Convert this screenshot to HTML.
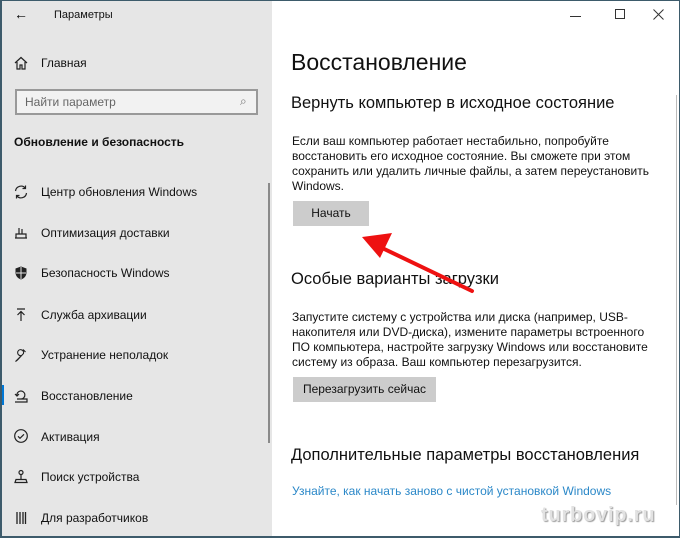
<!DOCTYPE html>
<html><head><meta charset="utf-8"><style>
*{margin:0;padding:0;box-sizing:border-box}
body{width:680px;height:538px;overflow:hidden;background:#fff;font-family:"Liberation Sans","DejaVu Sans",sans-serif;position:relative;color:#000}
.a{position:absolute;white-space:nowrap}
#side{position:absolute;left:0;top:0;width:272px;height:538px;background:#e6e6e6}
.nav{position:absolute;left:41px;font-size:12px;color:#111}
.ic{position:absolute;left:13px;width:16px;height:16px}
.p{font-size:12px;line-height:15px;color:#111}
.btn{position:absolute;background:#cccccc;font-size:12px;text-align:center;color:#111}
</style></head><body>
<div id="side">
 <div class="a" style="left:14px;top:6px;font-size:14px">←</div>
 <div class="a" style="left:54px;top:9px;font-size:11px;color:#111">Параметры</div>
 <svg class="ic" style="top:55px" viewBox="0 0 16 16" fill="none" stroke="#222" stroke-width="1.2"><path d="M2 8L8 2.5 14 8M4 7v7h3v-4h2v4h3V7"/></svg>
 <div class="nav" style="top:56px">Главная</div>
 <div class="a" style="left:15px;top:89px;width:243px;height:26px;border:2px solid #999;background:#f2f2f2"></div>
 <div class="a" style="left:25px;top:95px;font-size:12px;color:#666">Найти параметр</div>
 <div class="a" style="left:240px;top:94px;font-size:12px;color:#777">⌕</div>
 <div class="a" style="left:14px;top:135px;font-size:12px;font-weight:bold;color:#111">Обновление и безопасность</div>
 <div class="a" style="left:268px;top:183px;width:2px;height:260px;background:#8a8a8a"></div>
 <div class="a" style="left:0;top:385px;width:4px;height:20px;background:#0078d7"></div>
 <svg class="ic" style="top:184px" viewBox="0 0 16 16" fill="none" stroke="#222" stroke-width="1.2"><path d="M2.5 7a5.5 5.5 0 0 1 10-2.5M13.5 9a5.5 5.5 0 0 1-10 2.5M12.5 1.5v3h-3M3.5 14.5v-3h3"/></svg>
 <div class="nav" style="top:185px">Центр обновления Windows</div>
 <svg class="ic" style="top:225px" viewBox="0 0 16 16" fill="none" stroke="#222" stroke-width="1.2"><path d="M2 13h12M3 13V9h10v4M6 9V3M9 9V4"/></svg>
 <div class="nav" style="top:226px">Оптимизация доставки</div>
 <svg class="ic" style="top:265px" viewBox="0 0 16 16"><path d="M8 1.5L2.5 3.5v4c0 3.5 2.5 6 5.5 7 3-1 5.5-3.5 5.5-7v-4z" fill="#222"/><path d="M8 2v12M3 8h10" stroke="#e6e6e6" stroke-width="1"/></svg>
 <div class="nav" style="top:266px">Безопасность Windows</div>
 <svg class="ic" style="top:307px" viewBox="0 0 16 16" fill="none" stroke="#222" stroke-width="1.2"><path d="M4 2h8M8 14V4.5M4.5 8L8 4.5 11.5 8"/></svg>
 <div class="nav" style="top:308px">Служба архивации</div>
 <svg class="ic" style="top:347px" viewBox="0 0 16 16" fill="none" stroke="#222" stroke-width="1.1"><path d="M2.5 14.5l6-6a3 3 0 1 1 2-2 2 2 0 0 0 0 0l-6 6.5zM10 2.5l2.5 2.5"/></svg>
 <div class="nav" style="top:348px">Устранение неполадок</div>
 <svg class="ic" style="top:388px" viewBox="0 0 16 16" fill="none" stroke="#222" stroke-width="1.2"><path d="M2 14h12v-3H4M4 8a4 4 0 1 1 4 3M2 6l2 2 2-2"/></svg>
 <div class="nav" style="top:389px">Восстановление</div>
 <svg class="ic" style="top:428px" viewBox="0 0 16 16" fill="none" stroke="#222" stroke-width="1.2"><circle cx="8" cy="8" r="6.3"/><path d="M5 8.3l2 2 4-4"/></svg>
 <div class="nav" style="top:430px">Активация</div>
 <svg class="ic" style="top:469px" viewBox="0 0 16 16" fill="none" stroke="#222" stroke-width="1.2"><circle cx="8" cy="3.5" r="2"/><path d="M8 5.5v5M3 10.5h10l1 3H2z"/></svg>
 <div class="nav" style="top:470px">Поиск устройства</div>
 <svg class="ic" style="top:510px" viewBox="0 0 16 16" fill="none" stroke="#222" stroke-width="1.3"><path d="M4 2v12M7 2v12M10 2v12M12.5 2v12"/></svg>
 <div class="nav" style="top:511px">Для разработчиков</div>
</div>
<div class="a" style="left:570px;top:16px;width:11px;height:1px;background:#333"></div>
<div class="a" style="left:615px;top:9px;width:10px;height:10px;border:1px solid #333"></div>
<svg class="a" style="left:653px;top:9px" width="11" height="11"><path d="M0.5 0.5L10.5 10.5M10.5 0.5L0.5 10.5" stroke="#333" stroke-width="1"/></svg>
<div class="a" style="left:676px;top:95px;width:1px;height:410px;background:#bbb"></div>
<div class="a" style="left:291px;top:49px;font-size:23px;color:#111">Восстановление</div>
<div class="a" style="left:291px;top:94px;font-size:16.5px;color:#111">Вернуть компьютер в исходное состояние</div>
<div class="a p" style="left:292px;top:134px">Если ваш компьютер работает нестабильно, попробуйте<br>восстановить его исходное состояние. Вы сможете при этом<br>сохранить или удалить личные файлы, а затем переустановить<br>Windows.</div>
<div class="btn" style="left:293px;top:201px;width:76px;height:25px;line-height:25px">Начать</div>
<div class="a" style="left:291px;top:270px;font-size:16.5px;color:#111">Особые варианты загрузки</div>
<div class="a p" style="left:292px;top:310px">Запустите систему с устройства или диска (например, USB-<br>накопителя или DVD-диска), измените параметры встроенного<br>ПО компьютера, настройте загрузку Windows или восстановите<br>систему из образа. Ваш компьютер перезагрузится.</div>
<div class="btn" style="left:293px;top:377px;width:143px;height:25px;line-height:25px">Перезагрузить сейчас</div>
<div class="a" style="left:291px;top:446px;font-size:16.5px;color:#111">Дополнительные параметры восстановления</div>
<div class="a" style="left:292px;top:484px;font-size:12px;color:#2b88c8">Узнайте, как начать заново с чистой установкой Windows</div>
<div class="a" style="left:541px;top:504px;font-size:20px;font-weight:bold;letter-spacing:0.8px;color:#e2e2e2;text-shadow:1px 1px 1px #9a9a9a">turbovip.ru</div>
<svg class="a" style="left:0;top:0" width="680" height="538"><path d="M472 291L378 246" stroke="#e11" stroke-width="4" stroke-linecap="round"/><path d="M362 237L392 233 380 258z" fill="#e11"/></svg>
<div class="a" style="left:0;top:0;width:680px;height:538px;border:1px solid #3d5b6b;border-left-width:2px;border-bottom-width:2px"></div>
</body></html>
